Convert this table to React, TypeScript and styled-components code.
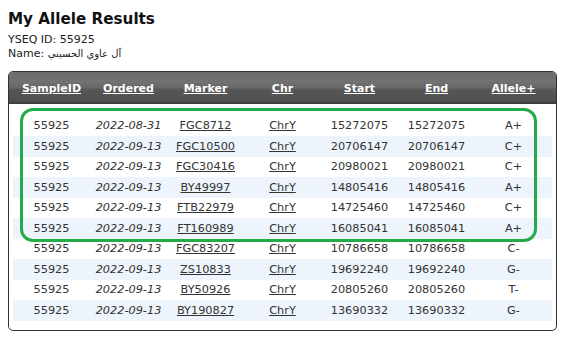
import styled, { createGlobalStyle } from "styled-components";

const GlobalStyle = createGlobalStyle`
  body {
    margin: 8px;
    background: #fff;
    font-family: "DejaVu Sans", Verdana, sans-serif;
    color: #222;
  }
`;

const Title = styled.h1`
  margin: 2px 0 4px;
  font-size: 15.2px;
  font-weight: bold;
  line-height: 19px;
  color: #111;
`;

const Info = styled.div`
  font-size: 11px;
  line-height: 14px;
  color: #222;
`;

const Arabic = styled.span`
  font-size: 10px;
`;

const Panel = styled.div`
  position: relative;
  margin-top: 10px;
  width: 547px;
  border: 1px solid #333;
  border-radius: 5px;
  overflow: hidden;
  background: #fff;
`;

const Header = styled.div`
  display: grid;
  grid-template-columns: repeat(7, 1fr);
  align-items: center;
  height: 32px;
  padding: 0 4px;
  background: linear-gradient(
    to bottom,
    #6c6c6c 0%,
    #727272 30%,
    #666 50%,
    #575757 54%,
    #4f4f4f 90%,
    #3a3a3a 100%
  );
`;

const HeadCell = styled.a`
  text-align: center;
  color: #fff;
  font-size: 11px;
  font-weight: bold;
  text-decoration: underline;
`;

const Body = styled.div`
  padding: 11.5px 4px 9px;
`;

const Row = styled.div<{ $striped: boolean }>`
  display: grid;
  grid-template-columns: repeat(7, 1fr);
  align-items: center;
  height: 20.5px;
  background: ${(p) => (p.$striped ? "#edf4fb" : "#fff")};
`;

const Cell = styled.span<{ $italic?: boolean; $link?: boolean }>`
  text-align: center;
  font-size: 11.3px;
  color: #333;
  font-style: ${(p) => (p.$italic ? "italic" : "normal")};
  text-decoration: ${(p) => (p.$link ? "underline" : "none")};
`;

const Highlight = styled.div`
  position: absolute;
  left: 11px;
  top: 36px;
  width: 511px;
  height: 128px;
  border: 3px solid #22ab47;
  border-radius: 13px;
  pointer-events: none;
`;

interface IResult {
  ordered: string;
  marker: string;
  start: string;
  allele: string;
}

const results: IResult[] = [
  { ordered: "2022-08-31", marker: "FGC8712", start: "15272075", allele: "A+" },
  { ordered: "2022-09-13", marker: "FGC10500", start: "20706147", allele: "C+" },
  { ordered: "2022-09-13", marker: "FGC30416", start: "20980021", allele: "C+" },
  { ordered: "2022-09-13", marker: "BY49997", start: "14805416", allele: "A+" },
  { ordered: "2022-09-13", marker: "FTB22979", start: "14725460", allele: "C+" },
  { ordered: "2022-09-13", marker: "FT160989", start: "16085041", allele: "A+" },
  { ordered: "2022-09-13", marker: "FGC83207", start: "10786658", allele: "C-" },
  { ordered: "2022-09-13", marker: "ZS10833", start: "19692240", allele: "G-" },
  { ordered: "2022-09-13", marker: "BY50926", start: "20805260", allele: "T-" },
  { ordered: "2022-09-13", marker: "BY190827", start: "13690332", allele: "G-" },
];

const columns = ["SampleID", "Ordered", "Marker", "Chr", "Start", "End", "Allele+"];

function App() {
  return (
    <>
      <GlobalStyle />
      <Title>My Allele Results</Title>
      <Info>YSEQ ID: 55925</Info>
      <Info>
        Name: <Arabic>آل عاوي الحسيني</Arabic>
      </Info>
      <Panel>
        <Header>
          {columns.map((c) => (
            <HeadCell key={c}>{c}</HeadCell>
          ))}
        </Header>
        <Body>
          {results.map((r, i) => (
            <Row key={r.marker} $striped={i % 2 === 1}>
              <Cell>55925</Cell>
              <Cell $italic>{r.ordered}</Cell>
              <Cell $link>{r.marker}</Cell>
              <Cell $link>ChrY</Cell>
              <Cell>{r.start}</Cell>
              <Cell>{r.start}</Cell>
              <Cell>{r.allele}</Cell>
            </Row>
          ))}
        </Body>
        {/* the annotated block of positive results */}
        <Highlight />
      </Panel>
    </>
  );
}

export default App;
